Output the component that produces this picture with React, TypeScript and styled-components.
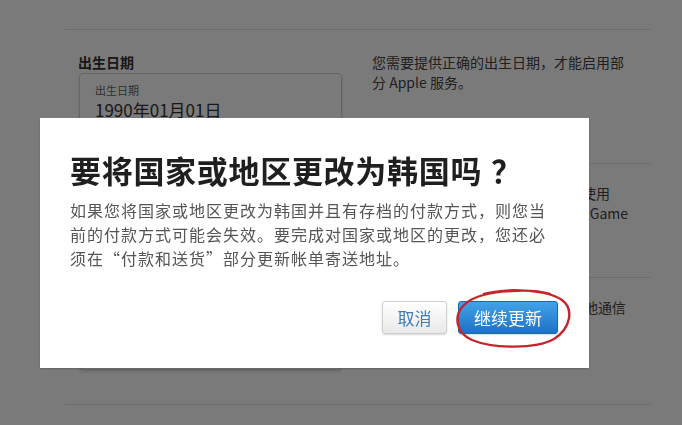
import styled, { createGlobalStyle } from "styled-components";

const GlobalStyle = createGlobalStyle`
  html, body {
    margin: 0;
    padding: 0;
    background: #ffffff;
    overflow: hidden;
  }
  body {
    font-family: "Noto Sans CJK SC", "Liberation Sans", sans-serif;
    color: #333;
  }
`;

const notes = [
  { lines: ["您需要提供正确的出生日期，才能启用部", "分 Apple 服务。"], h: 111, first: true },
  { lines: ["出生日期也将用于确定您是否可以使用", "家人共享、屏幕使用时间、iPod 和 Game", "Center 等功能。"], h: 114 },
  { lines: ["订阅 Apple 新闻、特惠活动以及其他通信"], h: 80 },
];

const App = () => {
  return (
    <>
      <GlobalStyle />
      <Page>
        <Section>
          <LeftCol>
            <FieldLabel>出生日期</FieldLabel>
            <InputBox>
              <InputHint>出生日期</InputHint>
              <InputValue>1990年01月01日</InputValue>
            </InputBox>
            <FieldLabel $gap={158}>国家或地区</FieldLabel>
            <InputBox $tall>
              <InputHint>国家或地区</InputHint>
              <InputValue>中国大陆</InputValue>
            </InputBox>
          </LeftCol>
          <RightCol>
            {notes.map((n, i) => (
              <Note key={i} $h={n.h} $first={n.first}>
                {n.lines.map((l, j) => (
                  <div key={j}>{l}</div>
                ))}
              </Note>
            ))}
          </RightCol>
        </Section>
      </Page>

      <Overlay>
        <Modal>
          <Title>
            要将国家或地区更改为韩国吗<Mark>？</Mark>
          </Title>
          <Message>
            如果您将国家或地区更改为韩国并且有存档的付款方式，则您当前的付款方式可能会失效。要完成对国家或地区的更改，您还必须在“付款和送货”部分更新帐单寄送地址。
          </Message>
          <Actions>
            <Button>取消</Button>
            <Marked>
              <Button $primary>继续更新</Button>
              <Circle viewBox="0 0 118 62" aria-hidden="true">
                <path
                  d="M30 6 C52 0 92 1 108 12 C120 21 117 40 100 51 C82 61 40 61 18 52 C2 45 -1 28 10 17 C18 9 34 4 58 3 C72 2 86 3 96 6"
                  fill="none"
                  stroke="#c4262c"
                  strokeWidth="2.4"
                  strokeLinecap="round"
                />
              </Circle>
            </Marked>
          </Actions>
        </Modal>
      </Overlay>
    </>
  );
};

export default App;

const Page = styled.div`
  margin-left: 65px;
  width: 585px;
  padding-top: 29px;
`;

const Section = styled.div`
  display: grid;
  grid-template-columns: 294px 1fr;
  border-top: 1px solid #e2e2e2;
  border-bottom: 1px solid #e2e2e2;
  padding: 22px 0 34px 13px;
`;

const LeftCol = styled.div`
  display: flex;
  flex-direction: column;
  align-items: flex-start;
`;

const FieldLabel = styled.div<{ $gap?: number }>`
  font-size: 14px;
  font-weight: bold;
  line-height: 20px;
  color: #333;
  margin-top: ${(p) => p.$gap ?? 0}px;
  margin-bottom: 1px;
`;

const InputBox = styled.div<{ $tall?: boolean }>`
  box-sizing: border-box;
  width: 263px;
  height: ${(p) => (p.$tall ? 60 : 58)}px;
  margin-left: 1px;
  padding: 9px 15px 0;
  border: 1px solid #d4d4d4;
  border-radius: 4px;
  box-shadow: 0 2px 3px rgba(0, 0, 0, 0.12);
`;

const InputHint = styled.div`
  font-size: 11px;
  line-height: 15px;
  color: #666;
`;

const InputValue = styled.div`
  font-size: 17px;
  line-height: 24px;
  color: #333;
`;

const RightCol = styled.div`
  display: flex;
  flex-direction: column;
  font-size: 14px;
  line-height: 20px;
  color: #444;
`;

const Note = styled.div<{ $h: number; $first?: boolean }>`
  box-sizing: border-box;
  height: ${(p) => p.$h}px;
  padding-top: ${(p) => (p.$first ? 0 : 19)}px;
  border-top: ${(p) => (p.$first ? "none" : "1px solid #e2e2e2")};
  white-space: nowrap;
`;

const Overlay = styled.div`
  position: fixed;
  inset: 0;
  background: rgba(0, 0, 0, 0.52);
  display: flex;
  align-items: flex-start;
  padding: 118px 0 0 40px;
`;

const Modal = styled.div`
  box-sizing: border-box;
  width: 549px;
  background: #ffffff;
  padding: 33px 31px 34px 30px;
  box-shadow: 0 1px 2px rgba(0, 0, 0, 0.2);
`;

const Title = styled.h1`
  margin: 0;
  font-size: 31px;
  line-height: 37px;
  font-weight: bold;
  letter-spacing: 0.7px;
  color: #1f1f1f;
`;

const Mark = styled.span`
  padding-left: 9px;
`;

const Message = styled.p`
  margin: 10px 0 0;
  width: 482px;
  font-size: 16px;
  line-height: 24px;
  letter-spacing: 1px;
  color: #555;
`;

const Actions = styled.div`
  display: flex;
  justify-content: flex-end;
  gap: 11px;
  margin-top: 31px;
`;

const Marked = styled.div`
  position: relative;
`;

const Button = styled.button<{ $primary?: boolean }>`
  box-sizing: border-box;
  height: 33px;
  min-width: ${(p) => (p.$primary ? 100 : 65)}px;
  padding: 0 14px;
  border-radius: 3px;
  font-family: "Noto Sans CJK SC", "Liberation Sans", sans-serif;
  font-size: 17px;
  cursor: pointer;
  border: 1px solid ${(p) => (p.$primary ? "#1b67b3" : "#cfcfcf")};
  color: ${(p) => (p.$primary ? "#ffffff" : "#3f7cb8")};
  background: ${(p) =>
    p.$primary
      ? "linear-gradient(#42a2e8, #1d72c6)"
      : "linear-gradient(#ffffff, #e9e9e9)"};
  box-shadow: 0 1px 2px rgba(0, 0, 0, 0.15);
`;

const Circle = styled.svg`
  position: absolute;
  left: -4px;
  top: -13px;
  width: 118px;
  height: 62px;
  pointer-events: none;
`;
